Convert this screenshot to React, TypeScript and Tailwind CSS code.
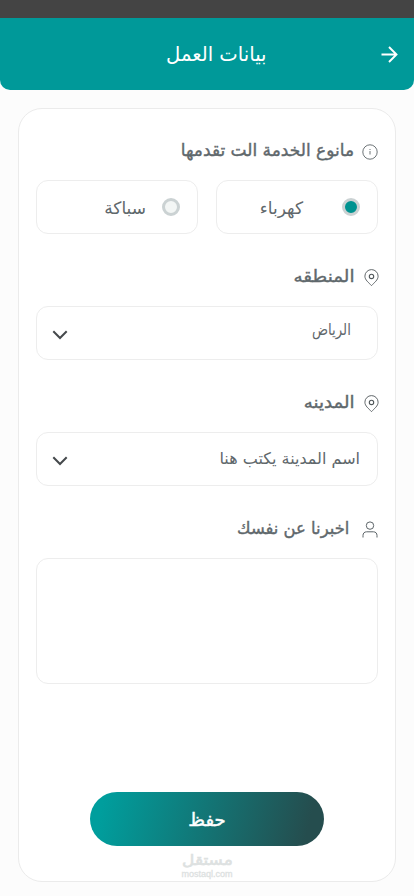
import type { ReactNode } from "react";
import clsx from "clsx";

function PinIcon() {
  return (
    <svg width="16" height="18" viewBox="0 0 16 18" fill="none" stroke="#50575a">
      <path d="M7.5 16.6C4.7 13.6.9 11 .9 7.2a6.6 6.6 0 0 1 13.2 0c0 3.8-3.8 6.4-6.6 9.4Z" strokeWidth="0.9" />
      <circle cx="7.5" cy="7.4" r="2.2" strokeWidth="1.1" />
    </svg>
  );
}

function InfoIcon() {
  return (
    <svg width="16" height="16" viewBox="0 0 16 16" fill="none" stroke="#5c6468">
      <circle cx="8" cy="8" r="7.2" strokeWidth="0.9" />
      <path d="M8 7v3.5M8 5v1" strokeWidth="0.9" />
    </svg>
  );
}

function UserIcon() {
  return (
    <svg className="-mt-0.5" width="16" height="17" viewBox="0 0 16 17" fill="none" stroke="#5c6468">
      <circle cx="8" cy="4.6" r="3.7" />
      <path d="M1 16.5v-2c0-2.2 1.3-3.7 3.6-3.7h6.8c2.3 0 3.6 1.5 3.6 3.7v2" />
    </svg>
  );
}

function Chevron() {
  return (
    <svg className="mt-1" width="16" height="10" viewBox="0 0 16 10" fill="none" stroke="#45494c" strokeWidth="2">
      <path d="M1.3 1.3 8 8l6.7-6.7" />
    </svg>
  );
}

interface SectionLabelProps {
  icon: ReactNode;
  className?: string;
  textClassName?: string;
  children: ReactNode;
}

function SectionLabel({ icon, className, textClassName, children }: SectionLabelProps) {
  return (
    <div className={clsx("flex h-[72px] items-center pt-4", className)}>
      {icon}
      <h2
        className={clsx(
          "-mt-1 origin-right whitespace-nowrap text-[17px] leading-6 text-[#5f686c] [-webkit-text-stroke:0.4px_#5f686c]",
          textClassName
        )}
      >
        {children}
      </h2>
    </div>
  );
}

interface OptionProps {
  checked?: boolean;
  className?: string;
  children: ReactNode;
}

function Option({ checked, className, children }: OptionProps) {
  return (
    <label className={clsx("flex h-[54px] w-[162px] items-center rounded-xl border border-[#ededed] pr-[17px]", className)}>
      <span
        className={clsx(
          "size-[18px] shrink-0 rounded-full border-[3px] border-[#cbd2d3]",
          checked ? "bg-[#009290]" : "bg-[#f3f6f5]"
        )}
      />
      <span className="whitespace-nowrap pt-0.5 text-[17px] leading-6">{children}</span>
    </label>
  );
}

export default function App() {
  return (
    <div
      dir="rtl"
      className="flex h-[896px] w-[414px] flex-col overflow-hidden bg-[#fcfcfc] font-['DejaVu_Sans',sans-serif] text-[#5f686c]"
    >
      <div className="h-[18px] shrink-0 bg-[#444444]" />
      <header className="flex h-[72px] shrink-0 items-center rounded-b-[10px] bg-[#009999] pr-[16px] text-white">
        <svg width="17" height="17" viewBox="0 0 17 17" fill="none" stroke="currentColor" strokeWidth="1.9">
          <path d="M.5 8.5h15M8 1l7.5 7.5L8 16" />
        </svg>
        <h1 className="mr-[114px] origin-right scale-x-[0.98] whitespace-nowrap text-[20px] leading-8">
          بيانات العمل
        </h1>
      </header>

      <main className="mx-[18px] mt-[18px] flex h-[774px] shrink-0 flex-col rounded-[24px] border border-[#ebebeb] bg-white px-[17px]">
        <SectionLabel icon={<InfoIcon />} className="-mt-px gap-2">
          مانوع الخدمة الت تقدمها
        </SectionLabel>
        <div className="flex justify-between">
          <Option checked className="gap-[39px]">كهرباء</Option>
          <Option className="gap-[16px]">سباكة</Option>
        </div>

        <SectionLabel icon={<PinIcon />} className="-mr-0.5 gap-[9px]" textClassName="scale-x-[1.08]">
          المنطقه
        </SectionLabel>
        <div className="flex h-[54px] items-center justify-between rounded-xl border border-[#ededed] pl-[15px] pr-[26px]">
          <span className="origin-right scale-x-[0.83] pb-1.5 text-[16px] leading-6">الرياض</span>
          <Chevron />
        </div>

        <SectionLabel icon={<PinIcon />} className="-mr-0.5 gap-[9px]" textClassName="scale-x-[1.07]">
          المدينه
        </SectionLabel>
        <div className="flex h-[54px] items-center justify-between rounded-xl border border-[#ededed] pl-[15px] pr-[17px]">
          <span className="text-[16px] leading-6">اسم المدينة يكتب هنا</span>
          <Chevron />
        </div>

        <SectionLabel icon={<UserIcon />} className="gap-[13px]" textClassName="scale-x-[0.965]">
          اخبرنا عن نفسك
        </SectionLabel>
        <textarea className="h-[126px] shrink-0 resize-none rounded-xl border border-[#ededed] p-4 text-[15px] outline-none" />

        <button className="mt-[108px] h-[54px] w-[234px] shrink-0 self-center rounded-full bg-[linear-gradient(103deg,#009e9d_6%,#254d4e_92%)] text-[18px] text-white [-webkit-text-stroke:0.5px_#fff]">
          حفظ
        </button>

        <div className="mt-[5px] flex flex-col items-center text-[#dde1e1]">
          <span className="scale-x-[1.13] text-[15px] leading-[18px] [-webkit-text-stroke:0.6px_#dde1e1]">مستقل</span>
          <span className="font-['Liberation_Sans',sans-serif] text-[9px] leading-[10px] [-webkit-text-stroke:0.3px_#dde1e1]">
            mostaql.com
          </span>
        </div>
      </main>
    </div>
  );
}
